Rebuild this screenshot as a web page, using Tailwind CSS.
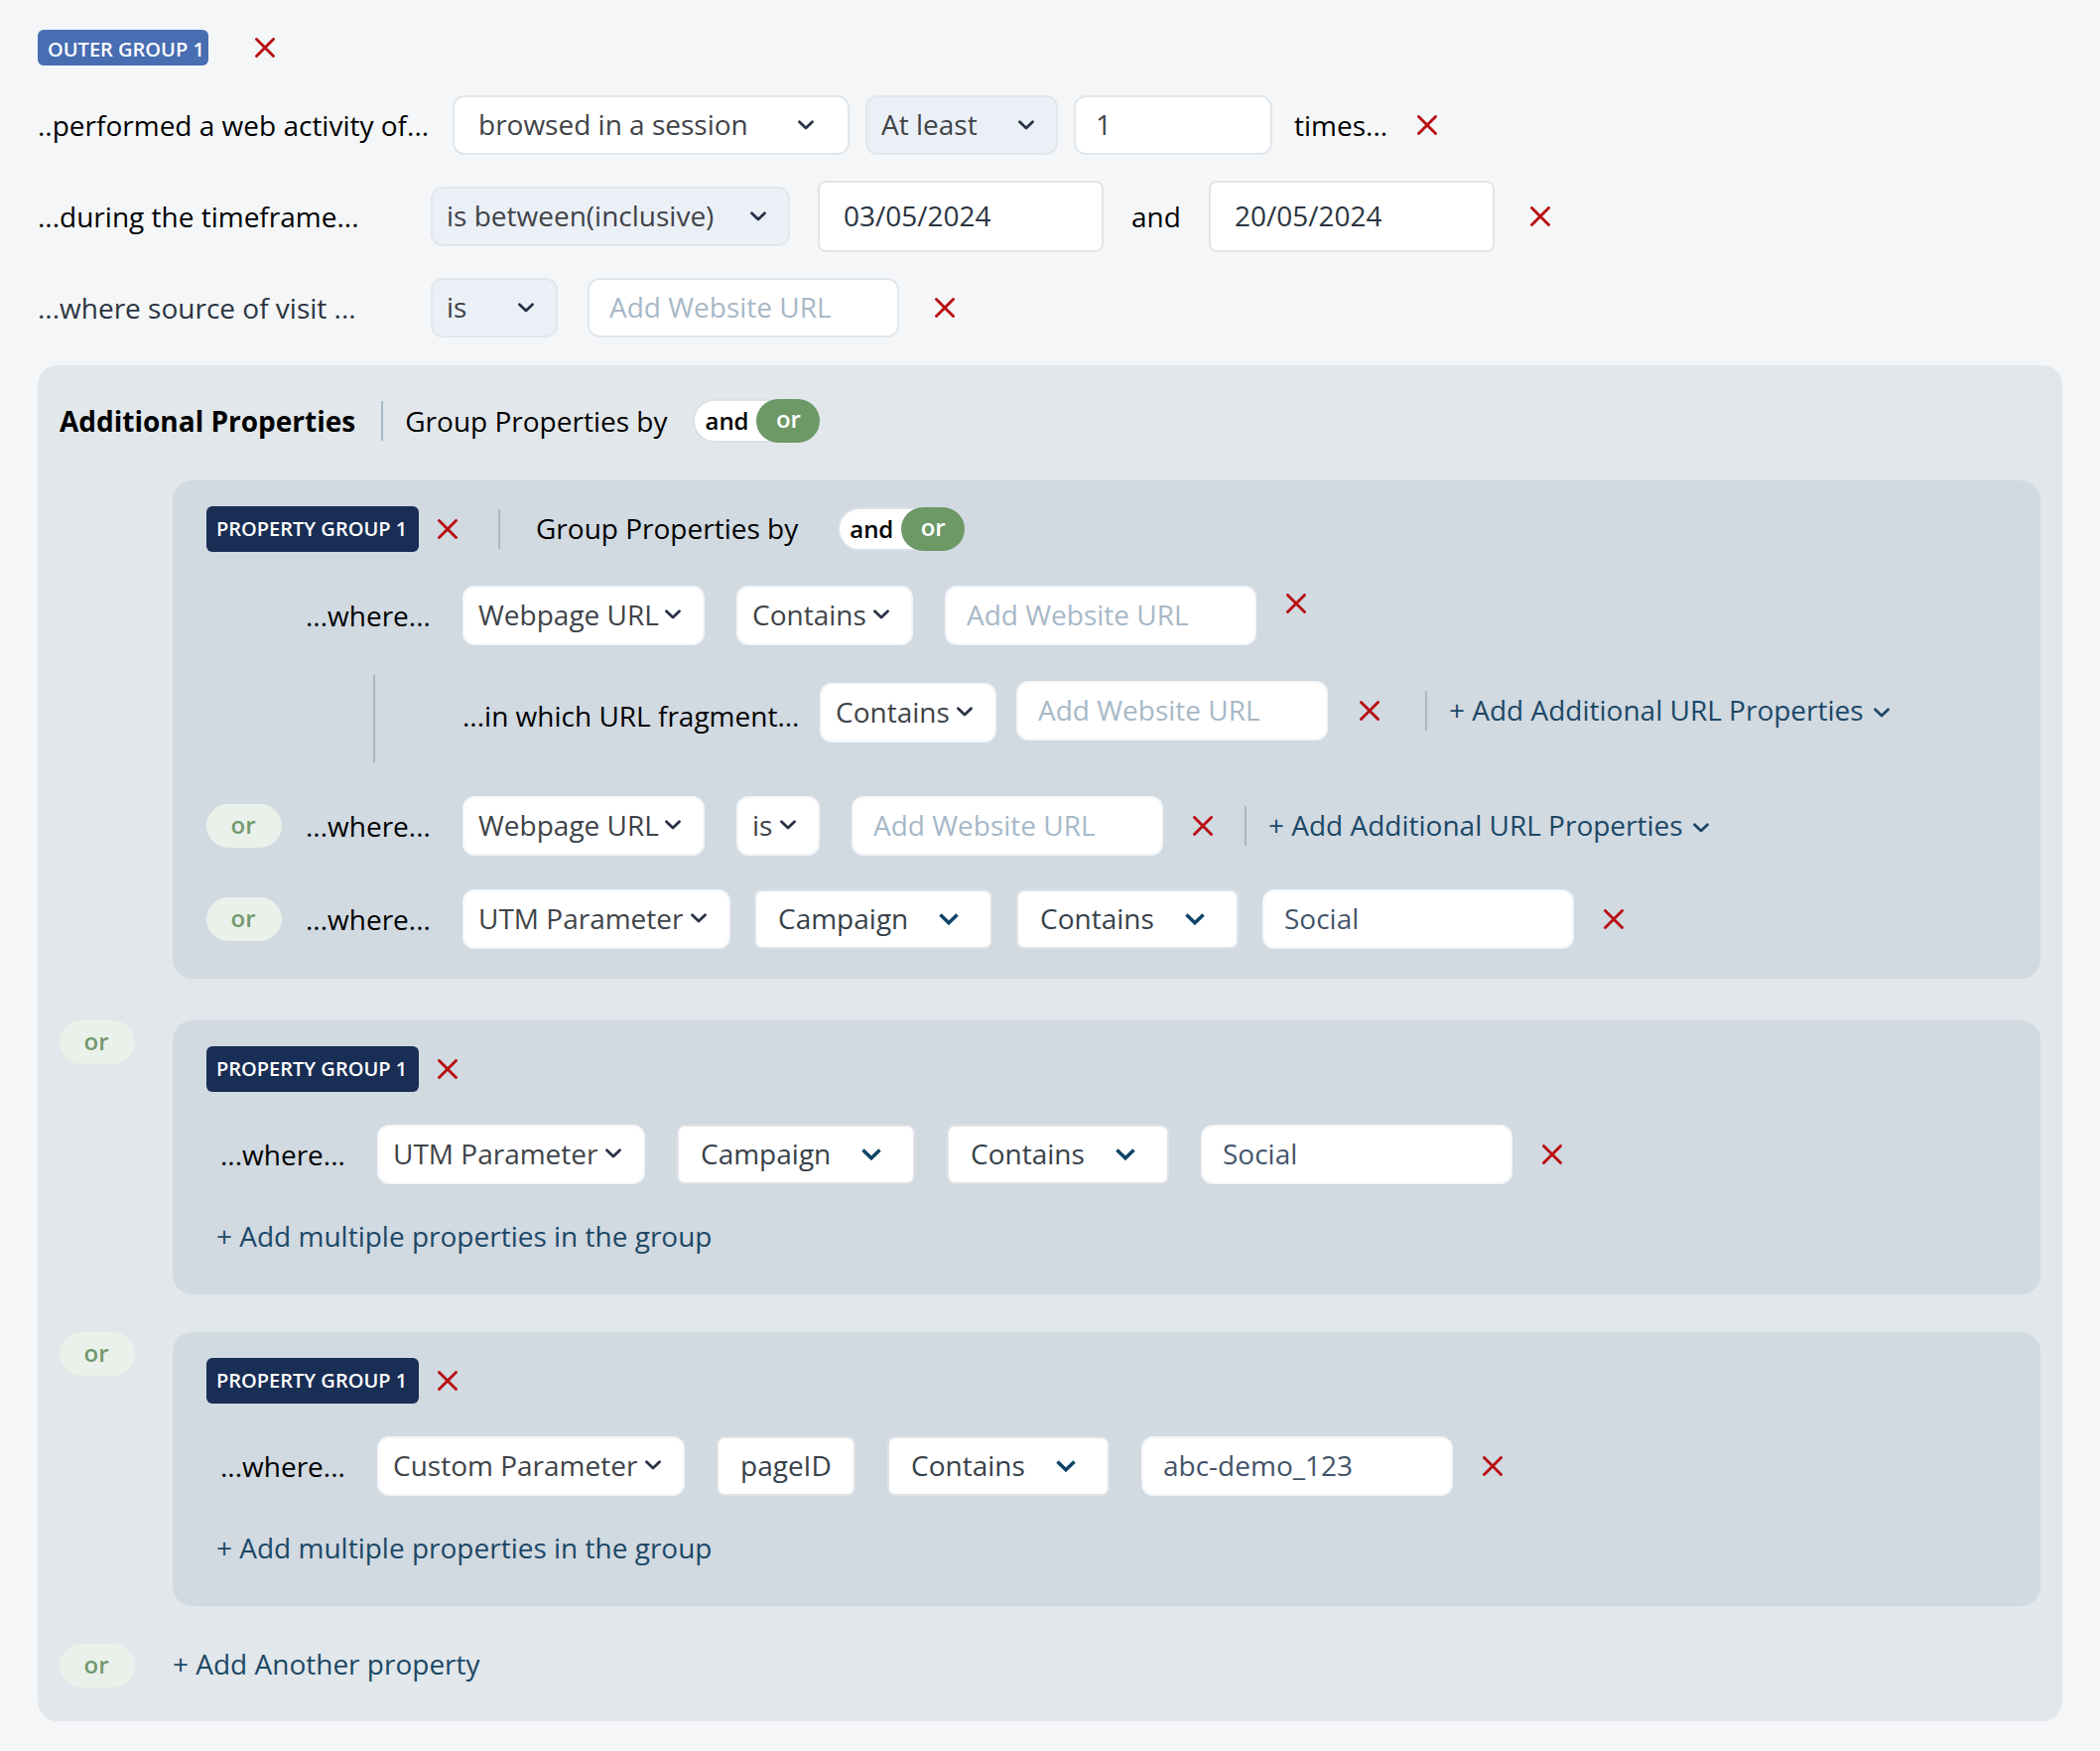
<!DOCTYPE html>
<html lang="en">
<head>
  <meta charset="UTF-8" />
  <meta name="viewport" content="width=device-width, initial-scale=1.0"/>
  <title>Audience Builder</title>
  <script src="https://cdn.jsdelivr.net/npm/@tailwindcss/browser@4"></script>
</head>
<body class="bg-[#f4f6f8] min-h-screen font-['Open_Sans',sans-serif] text-[28px] leading-[42px] text-black">

  <!-- Shared icons -->
  <svg class="hidden">
    <symbol id="icon-close" viewBox="0 0 20 20">
      <path d="M1.5 1.5 18.5 18.5M18.5 1.5 1.5 18.5" fill="none" stroke="currentColor" stroke-width="2.9" stroke-linecap="round"/>
    </symbol>
    <symbol id="icon-chevron" viewBox="0 0 16 10">
      <path d="M1.5 1.7 8 8 14.5 1.7" fill="none" stroke="currentColor" stroke-width="2.8" stroke-linecap="round" stroke-linejoin="round"/>
    </symbol>
    <symbol id="icon-chevron-bold" viewBox="0 0 20 12">
      <path d="M1.5 1.5 10 9.7 18.5 1.5" fill="none" stroke="currentColor" stroke-width="3.6"/>
    </symbol>
  </svg>

  <main class="px-[38px] pt-[30px] pb-[30px]">

    <!-- Outer group -->
    <div class="flex items-center h-9">
      <h1 class="flex items-center h-9 w-[172px] pl-2.5 pt-1 rounded-md bg-[#486db2] text-white text-[20px] leading-7 font-semibold whitespace-nowrap">OUTER GROUP 1</h1>
      <button type="button" aria-label="Remove outer group" class="ml-[47px] text-[#b80f12]"><svg class="w-5 h-5"><use href="#icon-close"/></svg></button>
    </div>

    <div class="flex items-center mt-[30px]">
      <label for="activity" class="w-[418px]">..performed a web activity of...</label>
      <div class="relative w-[400px]">
        <select id="activity" class="appearance-none w-full h-15 pl-6 pb-0.5 rounded-xl border-2 border-[#e1e7ec] bg-white text-[#3f4347]">
          <option>browsed in a session</option>
        </select>
        <svg class="absolute right-9 top-[25px] w-4 h-2.5 text-[#293247] pointer-events-none"><use href="#icon-chevron"/></svg>
      </div>
      <div class="relative ml-4 w-[194px]">
        <select aria-label="Frequency" class="appearance-none w-full h-15 pl-3.5 pb-0.5 rounded-xl border-2 border-[#e1e7ec] bg-[#ebf0f7] text-[#3f4347]">
          <option>At least</option>
        </select>
        <svg class="absolute right-6 top-[25px] w-4 h-2.5 text-[#293247] pointer-events-none"><use href="#icon-chevron"/></svg>
      </div>
      <input id="times" type="text" value="1" class="ml-4 w-[200px] h-15 pl-5 pb-0.5 rounded-xl border-2 border-[#e1e7ec] bg-white text-[#3f4347]"/>
      <label for="times" class="ml-[22px]">times...</label>
      <button type="button" aria-label="Remove activity" class="ml-[30px] text-[#b80f12]"><svg class="w-5 h-5"><use href="#icon-close"/></svg></button>
    </div>

    <div class="flex items-center mt-[26px]">
      <label for="timeframe" class="w-[396px]">...during the timeframe...</label>
      <div class="relative w-[362px]">
        <select id="timeframe" class="appearance-none w-full h-15 pl-3.5 pb-0.5 rounded-xl border-2 border-[#e1e7ec] bg-[#ebf0f7] text-[#3f4347]">
          <option>is between(inclusive)</option>
        </select>
        <svg class="absolute right-6 top-[25px] w-4 h-2.5 text-[#293247] pointer-events-none"><use href="#icon-chevron"/></svg>
      </div>
      <input id="from" aria-label="From date" type="text" value="03/05/2024" class="ml-7 w-[288px] h-18 pl-6 pb-0.5 rounded-lg border-2 border-[#e2e4e6] bg-white text-[#2b3441]"/>
      <label for="to" class="ml-7">and</label>
      <input id="to" type="text" value="20/05/2024" class="ml-7 w-[288px] h-18 pl-6 pb-0.5 rounded-lg border-2 border-[#e2e4e6] bg-white text-[#2b3441]"/>
      <button type="button" aria-label="Remove timeframe" class="ml-9 text-[#b80f12]"><svg class="w-5 h-5"><use href="#icon-close"/></svg></button>
    </div>

    <div class="flex items-center mt-[26px]">
      <label for="source" class="w-[396px] text-[#2b3441]">...where source of visit ...</label>
      <div class="relative w-32">
        <select id="source" class="appearance-none w-full h-15 pl-3.5 pb-0.5 rounded-xl border-2 border-[#e1e7ec] bg-[#ebf0f7] text-[#3f4347]">
          <option>is</option>
        </select>
        <svg class="absolute right-6 top-[25px] w-4 h-2.5 text-[#293247] pointer-events-none"><use href="#icon-chevron"/></svg>
      </div>
      <input aria-label="Source URL" type="text" placeholder="Add Website URL" class="ml-[30px] w-[314px] h-15 pl-5 pb-0.5 rounded-xl border-2 border-[#e1e7ec] bg-white text-[#44546a] placeholder:text-[#a7b8c7]"/>
      <button type="button" aria-label="Remove source" class="ml-9 text-[#b80f12]"><svg class="w-5 h-5"><use href="#icon-close"/></svg></button>
    </div>

    <!-- Additional properties -->
    <section class="mt-7 pl-[22px] pr-[22px] pt-[34px] pb-[34px] rounded-[20px] bg-[#e1e7ea]">
      <div class="flex items-center h-11">
        <h2 class="font-bold whitespace-nowrap">Additional Properties</h2>
        <div class="ml-[26px] w-0.5 h-10 bg-[#a8b9c6]"></div>
        <span class="ml-[22px]">Group Properties by</span>
        <div role="radiogroup" aria-label="Group all properties by" class="ml-[26px] flex w-[128px] h-11 rounded-full border-2 border-[#d9e0e6] bg-white text-[24px] leading-8 font-semibold">
          <label class="flex items-center pl-2.5 cursor-pointer"><input type="radio" name="outer-join" class="sr-only"/>and</label>
          <label class="flex items-center justify-center -my-0.5 -mr-0.5 ml-auto w-16 h-11 pb-1 rounded-full bg-[#6d9967] text-white cursor-pointer"><input type="radio" name="outer-join" checked class="sr-only"/>or</label>
        </div>
      </div>

      <!-- Property group with three conditions -->
      <div class="mt-[38px] ml-[114px] pl-[34px] pr-[34px] pt-[26px] pb-[30px] rounded-[20px] bg-[#d1d9e1]">
        <div class="flex items-center">
          <h3 class="flex items-center w-[214px] h-[46px] pl-2.5 rounded-md bg-[#192e54] text-white text-[20px] leading-7 font-semibold whitespace-nowrap">PROPERTY GROUP 1</h3>
          <button type="button" aria-label="Remove property group" class="ml-[19px] text-[#b80f12]"><svg class="w-5 h-5"><use href="#icon-close"/></svg></button>
          <div class="ml-[41px] w-0.5 h-10 bg-[#a8b9c6]"></div>
          <span class="ml-9 pb-0.5">Group Properties by</span>
          <div role="radiogroup" aria-label="Group these properties by" class="ml-10 flex w-[128px] h-11 rounded-full border-2 border-[#d9e0e6] bg-white text-[24px] leading-8 font-semibold">
            <label class="flex items-center pl-2.5 cursor-pointer"><input type="radio" name="inner-join" class="sr-only"/>and</label>
            <label class="flex items-center justify-center -my-0.5 -mr-0.5 ml-auto w-16 h-11 pb-1 rounded-full bg-[#6d9967] text-white cursor-pointer"><input type="radio" name="inner-join" checked class="sr-only"/>or</label>
          </div>
        </div>

        <div class="flex items-center mt-[34px] pl-[100px]">
          <label for="prop-1" class="w-[158px]">...where...</label>
          <div class="relative w-[244px]">
            <select id="prop-1" class="appearance-none w-full h-15 pl-3.5 pb-0.5 rounded-xl border-2 border-[#f3f6f9] bg-white text-[#3f4347]">
              <option>Webpage URL</option>
            </select>
            <svg class="absolute right-6 top-6 w-4 h-2.5 text-[#293247] pointer-events-none"><use href="#icon-chevron"/></svg>
          </div>
          <div class="relative ml-8 w-[178px]">
            <select aria-label="Operator" class="appearance-none w-full h-15 pl-3.5 pb-0.5 rounded-xl border-2 border-[#f3f6f9] bg-white text-[#3f4347]">
              <option>Contains</option>
            </select>
            <svg class="absolute right-6 top-6 w-4 h-2.5 text-[#293247] pointer-events-none"><use href="#icon-chevron"/></svg>
          </div>
          <input aria-label="Webpage URL" type="text" placeholder="Add Website URL" class="ml-8 w-[314px] h-15 pl-5 pb-0.5 rounded-xl border-2 border-[#f3f6f9] bg-white text-[#44546a] placeholder:text-[#a7b8c7]"/>
          <button type="button" aria-label="Remove condition" class="self-start ml-[30px] py-2 text-[#b80f12]"><svg class="w-5 h-5"><use href="#icon-close"/></svg></button>
        </div>

        <!-- Nested URL fragment -->
        <div class="flex items-start mt-[30px] ml-[168px]">
          <div class="w-0.5 h-[88px] bg-[#a8b9c6]"></div>
          <label for="fragment" class="ml-[88px] mt-5 w-[360px]">...in which URL fragment...</label>
          <div class="relative mt-2 w-[178px]">
            <select id="fragment" class="appearance-none w-full h-15 pl-3.5 pb-0.5 rounded-xl border-2 border-[#f3f6f9] bg-white text-[#3f4347]">
              <option>Contains</option>
            </select>
            <svg class="absolute right-6 top-6 w-4 h-2.5 text-[#293247] pointer-events-none"><use href="#icon-chevron"/></svg>
          </div>
          <div class="flex items-center mt-1.5 ml-5">
            <input aria-label="URL fragment" type="text" placeholder="Add Website URL" class="w-[314px] h-15 pl-5 pb-0.5 rounded-xl border-2 border-[#f3f6f9] bg-white text-[#44546a] placeholder:text-[#a7b8c7]"/>
            <button type="button" aria-label="Remove fragment" class="ml-8 text-[#b80f12]"><svg class="w-5 h-5"><use href="#icon-close"/></svg></button>
            <div class="ml-[46px] w-0.5 h-10 bg-[#a8b9c6]"></div>
            <button type="button" class="flex items-center gap-2.5 ml-[22px] pb-0.5 text-[#1c4866]">+ Add Additional URL Properties <svg class="mt-1.5 w-4 h-2.5"><use href="#icon-chevron"/></svg></button>
          </div>
        </div>

        <div class="flex items-center mt-[34px]">
          <span class="flex items-center justify-center w-19 h-11 pb-0.5 pr-0.5 rounded-full bg-[#eaf1ea] text-[#73996f] text-[24px] leading-8 font-semibold">or</span>
          <label for="prop-2" class="ml-6 w-[158px]">...where...</label>
          <div class="relative w-[244px]">
            <select id="prop-2" class="appearance-none w-full h-15 pl-3.5 pb-0.5 rounded-xl border-2 border-[#f3f6f9] bg-white text-[#3f4347]">
              <option>Webpage URL</option>
            </select>
            <svg class="absolute right-6 top-6 w-4 h-2.5 text-[#293247] pointer-events-none"><use href="#icon-chevron"/></svg>
          </div>
          <div class="relative ml-8 w-[84px]">
            <select aria-label="Operator" class="appearance-none w-full h-15 pl-3.5 pb-0.5 rounded-xl border-2 border-[#f3f6f9] bg-white text-[#3f4347]">
              <option>is</option>
            </select>
            <svg class="absolute right-6 top-6 w-4 h-2.5 text-[#293247] pointer-events-none"><use href="#icon-chevron"/></svg>
          </div>
          <input aria-label="Webpage URL" type="text" placeholder="Add Website URL" class="ml-8 w-[314px] h-15 pl-5 pb-0.5 rounded-xl border-2 border-[#f3f6f9] bg-white text-[#44546a] placeholder:text-[#a7b8c7]"/>
          <button type="button" aria-label="Remove condition" class="ml-[30px] text-[#b80f12]"><svg class="w-5 h-5"><use href="#icon-close"/></svg></button>
          <div class="ml-8 w-0.5 h-10 bg-[#a8b9c6]"></div>
          <button type="button" class="flex items-center gap-2.5 ml-[22px] pb-0.5 text-[#1c4866]">+ Add Additional URL Properties <svg class="mt-1.5 w-4 h-2.5"><use href="#icon-chevron"/></svg></button>
        </div>

        <div class="flex items-center mt-[34px]">
          <span class="flex items-center justify-center w-19 h-11 pb-0.5 pr-0.5 rounded-full bg-[#eaf1ea] text-[#73996f] text-[24px] leading-8 font-semibold">or</span>
          <label for="prop-3" class="ml-6 w-[158px]">...where...</label>
          <div class="relative w-[270px]">
            <select id="prop-3" class="appearance-none w-full h-15 pl-3.5 pb-0.5 rounded-xl border-2 border-[#f3f6f9] bg-white text-[#3f4347]">
              <option>UTM Parameter</option>
            </select>
            <svg class="absolute right-6 top-6 w-4 h-2.5 text-[#293247] pointer-events-none"><use href="#icon-chevron"/></svg>
          </div>
          <div class="relative ml-6 w-60">
            <select aria-label="Parameter" class="appearance-none w-full h-15 pl-[22px] pb-0.5 rounded-lg border-2 border-[#dfe3e7] bg-white text-[#374149]">
              <option>Campaign</option>
            </select>
            <svg class="absolute right-[34px] top-6 w-5 h-3 text-[#0f4467] pointer-events-none"><use href="#icon-chevron-bold"/></svg>
          </div>
          <div class="relative ml-6 w-[224px]">
            <select aria-label="Operator" class="appearance-none w-full h-15 pl-[22px] pb-0.5 rounded-lg border-2 border-[#dfe3e7] bg-white text-[#374149]">
              <option>Contains</option>
            </select>
            <svg class="absolute right-[34px] top-6 w-5 h-3 text-[#0f4467] pointer-events-none"><use href="#icon-chevron-bold"/></svg>
          </div>
          <input aria-label="Value" type="text" value="Social" class="ml-6 w-[314px] h-15 pl-5 pb-0.5 rounded-xl border-2 border-[#f3f6f9] bg-white text-[#44546a]"/>
          <button type="button" aria-label="Remove condition" class="ml-[30px] text-[#b80f12]"><svg class="w-5 h-5"><use href="#icon-close"/></svg></button>
        </div>
      </div>

      <!-- UTM parameter group -->
      <div class="flex items-start mt-[42px]">
        <span class="flex items-center justify-center w-19 h-11 pb-0.5 pr-0.5 rounded-full bg-[#eaf1ea] text-[#73996f] text-[24px] leading-8 font-semibold">or</span>
        <div class="grow ml-[38px] pl-[34px] pr-[34px] pt-[26px] pb-[38px] rounded-[20px] bg-[#d1d9e1]">
          <div class="flex items-center">
            <h3 class="flex items-center w-[214px] h-[46px] pl-2.5 rounded-md bg-[#192e54] text-white text-[20px] leading-7 font-semibold whitespace-nowrap">PROPERTY GROUP 1</h3>
            <button type="button" aria-label="Remove property group" class="ml-[19px] text-[#b80f12]"><svg class="w-5 h-5"><use href="#icon-close"/></svg></button>
          </div>
          <div class="flex items-center mt-[33px] pl-3.5">
            <label for="prop-4" class="w-[158px]">...where...</label>
            <div class="relative w-[270px]">
              <select id="prop-4" class="appearance-none w-full h-15 pl-3.5 pb-0.5 rounded-xl border-2 border-[#f3f6f9] bg-white text-[#3f4347]">
                <option>UTM Parameter</option>
              </select>
              <svg class="absolute right-6 top-6 w-4 h-2.5 text-[#293247] pointer-events-none"><use href="#icon-chevron"/></svg>
            </div>
            <div class="relative ml-8 w-60">
              <select aria-label="Parameter" class="appearance-none w-full h-15 pl-[22px] pb-0.5 rounded-lg border-2 border-[#dfe3e7] bg-white text-[#374149]">
                <option>Campaign</option>
              </select>
              <svg class="absolute right-[34px] top-6 w-5 h-3 text-[#0f4467] pointer-events-none"><use href="#icon-chevron-bold"/></svg>
            </div>
            <div class="relative ml-8 w-[224px]">
              <select aria-label="Operator" class="appearance-none w-full h-15 pl-[22px] pb-0.5 rounded-lg border-2 border-[#dfe3e7] bg-white text-[#374149]">
                <option>Contains</option>
              </select>
              <svg class="absolute right-[34px] top-6 w-5 h-3 text-[#0f4467] pointer-events-none"><use href="#icon-chevron-bold"/></svg>
            </div>
            <input aria-label="Value" type="text" value="Social" class="ml-8 w-[314px] h-15 pl-5 pb-0.5 rounded-xl border-2 border-[#f3f6f9] bg-white text-[#44546a]"/>
            <button type="button" aria-label="Remove condition" class="ml-[30px] text-[#b80f12]"><svg class="w-5 h-5"><use href="#icon-close"/></svg></button>
          </div>
          <button type="button" class="block mt-[31px] ml-2.5 text-[#1c4866]">+ Add multiple properties in the group</button>
        </div>
      </div>

      <!-- Custom parameter group -->
      <div class="flex items-start mt-[38px]">
        <span class="flex items-center justify-center w-19 h-11 pb-0.5 pr-0.5 rounded-full bg-[#eaf1ea] text-[#73996f] text-[24px] leading-8 font-semibold">or</span>
        <div class="grow ml-[38px] pl-[34px] pr-[34px] pt-[26px] pb-[38px] rounded-[20px] bg-[#d1d9e1]">
          <div class="flex items-center">
            <h3 class="flex items-center w-[214px] h-[46px] pl-2.5 rounded-md bg-[#192e54] text-white text-[20px] leading-7 font-semibold whitespace-nowrap">PROPERTY GROUP 1</h3>
            <button type="button" aria-label="Remove property group" class="ml-[19px] text-[#b80f12]"><svg class="w-5 h-5"><use href="#icon-close"/></svg></button>
          </div>
          <div class="flex items-center mt-[33px] pl-3.5">
            <label for="prop-5" class="w-[158px]">...where...</label>
            <div class="relative w-[310px]">
              <select id="prop-5" class="appearance-none w-full h-15 pl-3.5 pb-0.5 rounded-xl border-2 border-[#f3f6f9] bg-white text-[#3f4347]">
                <option>Custom Parameter</option>
              </select>
              <svg class="absolute right-6 top-6 w-4 h-2.5 text-[#293247] pointer-events-none"><use href="#icon-chevron"/></svg>
            </div>
            <input aria-label="Parameter name" type="text" value="pageID" class="ml-8 w-[140px] h-15 pl-[22px] pb-0.5 rounded-lg border-2 border-[#dfe3e7] bg-white text-[#374149]"/>
            <div class="relative ml-8 w-[224px]">
              <select aria-label="Operator" class="appearance-none w-full h-15 pl-[22px] pb-0.5 rounded-lg border-2 border-[#dfe3e7] bg-white text-[#374149]">
                <option>Contains</option>
              </select>
              <svg class="absolute right-[34px] top-6 w-5 h-3 text-[#0f4467] pointer-events-none"><use href="#icon-chevron-bold"/></svg>
            </div>
            <input aria-label="Value" type="text" value="abc-demo_123" class="ml-8 w-[314px] h-15 pl-5 pb-0.5 rounded-xl border-2 border-[#f3f6f9] bg-white text-[#44546a]"/>
            <button type="button" aria-label="Remove condition" class="ml-[30px] text-[#b80f12]"><svg class="w-5 h-5"><use href="#icon-close"/></svg></button>
          </div>
          <button type="button" class="block mt-[31px] ml-2.5 text-[#1c4866]">+ Add multiple properties in the group</button>
        </div>
      </div>

      <div class="flex items-center mt-[38px]">
        <span class="flex items-center justify-center w-19 h-11 pb-0.5 pr-0.5 rounded-full bg-[#eaf1ea] text-[#73996f] text-[24px] leading-8 font-semibold">or</span>
        <button type="button" class="ml-[38px] pb-1 leading-10 text-[#1c4866]">+ Add Another property</button>
      </div>
    </section>
  </main>
</body>
</html>
